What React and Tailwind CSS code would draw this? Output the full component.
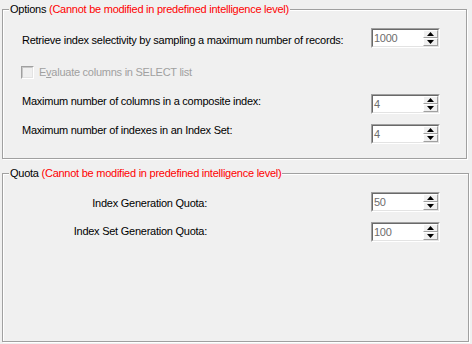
import React from "react";

function Arrow({ up }) {
  return (
    <svg width="7" height="4" viewBox="0 0 7 4" className="block">
      {up ? <path d="M3.5 0 L7 4 L0 4 Z" fill="#000" /> : <path d="M0 0 L7 0 L3.5 4 Z" fill="#000" />}
    </svg>
  );
}

function SpinButton({ up }) {
  return (
    <div className="flex h-[8px] items-center justify-center border-t border-l border-white border-r border-b border-r-[#a0a0a0] border-b-[#a0a0a0] bg-[#f0f0f0]">
      <Arrow up={up} />
    </div>
  );
}

function Spin({ value }) {
  return (
    <div className="flex h-[20px] w-[69px] shrink-0 border border-[#a0a0a0] border-r-white border-b-white">
      <div className="flex flex-1 border border-[#696969] border-r-[#e3e3e3] border-b-[#e3e3e3] bg-white">
        <span className="flex-1 pl-[1px] leading-[16px] text-[#6d6d6d]">{value}</span>
        <div className="flex w-[15px] flex-col">
          <SpinButton up />
          <SpinButton />
        </div>
      </div>
    </div>
  );
}

function Group({ title, className, children }) {
  return (
    <fieldset
      className={
        "ml-[2px] border border-[#a0a0a0] px-[6px] shadow-[inset_1px_1px_0_#fff,1px_1px_0_#fff] " +
        className
      }
    >
      <legend className="bg-[#f0f0f0] px-[1px] leading-[13px]">
        {title} <span className="text-[#ff0000]">(Cannot be modified in predefined intelligence level)</span>
      </legend>
      {children}
    </fieldset>
  );
}

export default function App() {
  return (
    <div
      className="flex h-[344px] w-[472px] flex-col bg-[#f0f0f0] text-[11px] tracking-[-0.25px] text-black"
      style={{ fontFamily: '"Liberation Sans", Arial, sans-serif' }}
    >
      <Group title="Options" className="mt-[3px] w-[465px] pt-[12px] pb-[14px]">
        <div className="ml-[13px] flex h-[20px] w-[418px] items-start justify-between">
          <span className="pt-[6px] leading-[13px]">
            Retrieve index selectivity by sampling a maximum number of records:
          </span>
          <Spin value="1000" />
        </div>

        <div className="mt-[18px] ml-[12px] flex h-[13px] items-center gap-[5px]">
          <div className="h-[13px] w-[13px] border border-[#a0a0a0] border-r-white border-b-white">
            <div className="h-full w-full border border-[#c8c8c8] border-r-[#e3e3e3] border-b-[#e3e3e3] bg-[#f0f0f0]" />
          </div>
          <span className="leading-[13px] text-[#a0a0a0]">
            E<span className="underline">v</span>aluate columns in SELECT list
          </span>
        </div>

        <div className="mt-[15px] ml-[13px] flex h-[20px] w-[418px] items-start justify-between">
          <span className="pt-[1px] leading-[13px]">Maximum number of columns in a composite index:</span>
          <Spin value="4" />
        </div>

        <div className="mt-[10px] ml-[13px] flex h-[20px] w-[418px] items-start justify-between">
          <span className="leading-[13px]">Maximum number of indexes in an Index Set:</span>
          <Spin value="4" />
        </div>
      </Group>

      <Group title="Quota" className="mt-[8px] mb-[2px] w-[467px] flex-1 pt-[12px]">
        <div className="flex h-[20px] w-[431px] items-start justify-between">
          <span className="w-[198px] pt-[5px] text-right leading-[13px]">Index Generation Quota:</span>
          <Spin value="50" />
        </div>
        <div className="mt-[10px] flex h-[20px] w-[431px] items-start justify-between">
          <span className="w-[198px] pt-[3px] text-right leading-[13px]">Index Set Generation Quota:</span>
          <Spin value="100" />
        </div>
      </Group>
    </div>
  );
}
